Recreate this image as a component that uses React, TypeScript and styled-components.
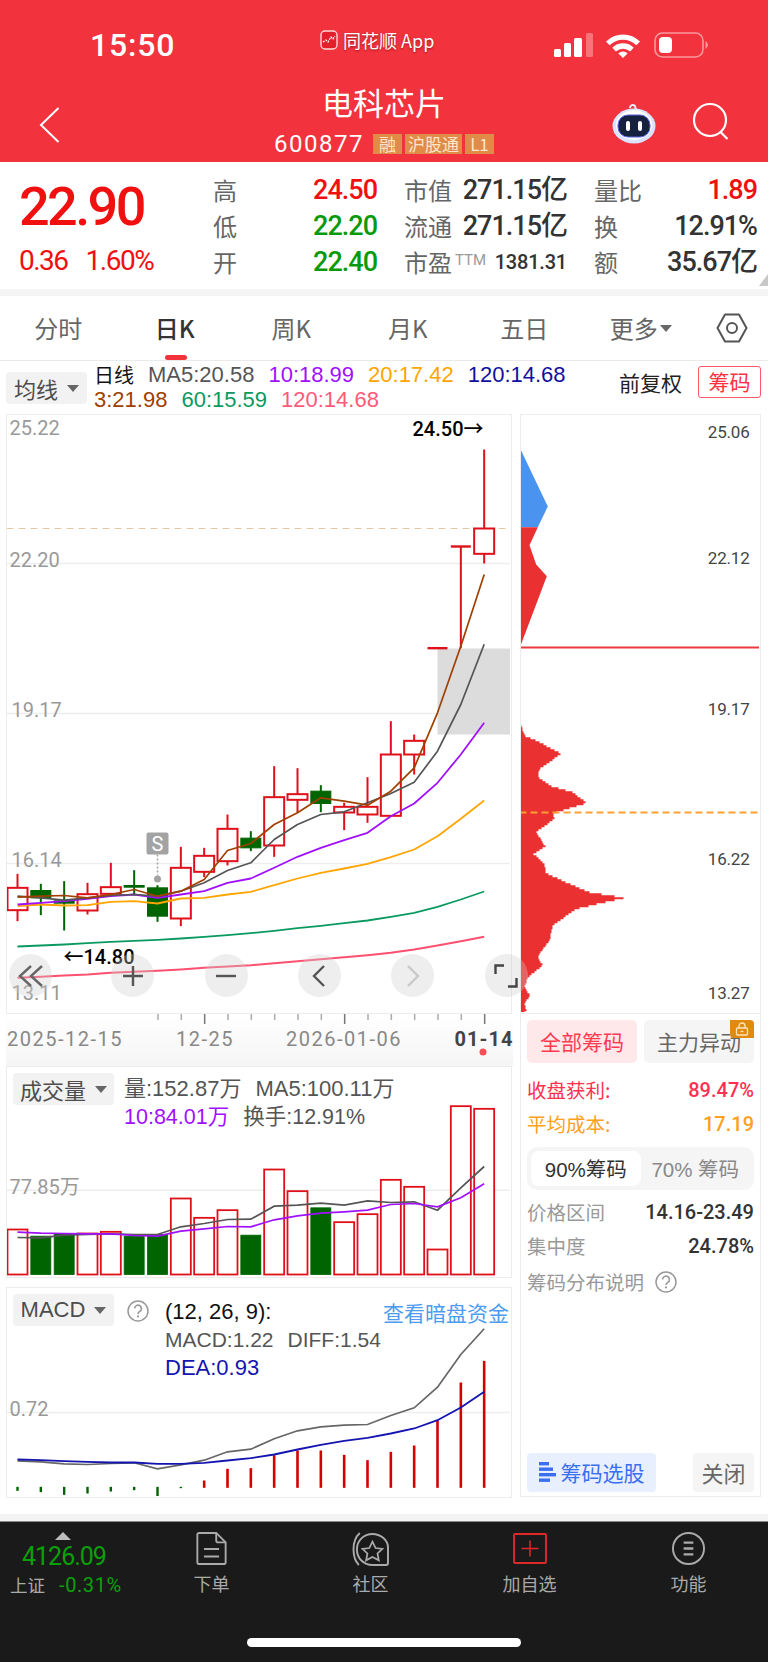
import React from "react";
import styled, { createGlobalStyle } from "styled-components";

const UI = '"Liberation Sans", "Noto Sans CJK SC", sans-serif';
const NUM = 'Roboto, "Noto Sans CJK SC", sans-serif';
const CJK = '"Noto Sans CJK SC", sans-serif';

const RED = "#e0101a";
const GREEN = "#006400";
const QUOTE_RED = "#f01010";
const QUOTE_GREEN = "#099a09";

const Global = createGlobalStyle`
  html, body { margin: 0; padding: 0; background: #fff; }
  body { width: 768px; height: 1662px; overflow: hidden; font-family: ${UI}; }
  * { box-sizing: border-box; }
`;

const Page = styled.div`
  width: 768px;
  height: 1662px;
  display: flex;
  flex-direction: column;
  overflow: hidden;
`;

/* ---------- red header ---------- */
const Header = styled.header`
  height: 162px;
  background: #f2323c;
  color: #fff;
  display: flex;
  flex-direction: column;
`;
const StatusBar = styled.div`
  height: 80px;
  display: grid;
  grid-template-columns: 320px 1fr auto;
  align-items: start;
`;
const Clock = styled.div`
  padding: 26px 0 0 90px;
  font: 500 32px/38px ${NUM};
  letter-spacing: 0.8px;
`;
const AppBadge = styled.div`
  display: flex;
  align-items: center;
  gap: 5px;
  padding-top: 28px;
  font: 400 18px/24px ${CJK};
  text-shadow: 0 1px 2px rgba(90, 0, 0, 0.55);
`;
const StatusIcons = styled.div`
  padding: 32px 58px 0 0;
`;
const NavRow = styled.div`
  height: 82px;
  display: grid;
  grid-template-columns: 1fr auto 1fr;
`;
const BackSlot = styled.div`
  padding: 26px 0 0 39px;
`;
const TitleBlock = styled.div`
  display: flex;
  flex-direction: column;
  align-items: center;
`;
const Title = styled.div`
  margin-top: 1px;
  font: 400 31px/42px ${CJK};
`;
const SubLine = styled.div`
  margin-top: 9px;
  display: flex;
  align-items: center;
  gap: 3px;
`;
const Code = styled.span`
  font: 400 24px/24px ${NUM};
  letter-spacing: 1.5px;
  margin-right: 6px;
`;
const Tag = styled.span`
  height: 20px;
  min-width: 29px;
  padding: 0 3px;
  text-align: center;
  background: #e08c48;
  color: #fde6c8;
  font: 400 17px/20px ${CJK};
`;
const ActionSlot = styled.div`
  display: flex;
  justify-content: flex-end;
  gap: 36px;
  padding: 22px 38px 0 0;
`;

/* ---------- quote summary ---------- */
const Quote = styled.section`
  position: relative;
  height: 127px;
  display: flex;
`;
const PriceBlock = styled.div`
  width: 213px;
  padding: 17px 0 0 19px;
`;
const Price = styled.div`
  font: 500 54px/56px ${NUM};
  letter-spacing: -2.6px;
  color: ${QUOTE_RED};
`;
const Change = styled.div`
  margin-top: 11px;
  display: flex;
  gap: 18px;
  font: 400 28px/30px ${NUM};
  letter-spacing: -1.5px;
  color: ${QUOTE_RED};
`;
const Stats = styled.div`
  display: grid;
  grid-template-columns: 164px 163px 163px;
  grid-auto-rows: 36px;
  column-gap: 27px;
  padding-top: 10px;
`;
const Stat = styled.div`
  display: flex;
  justify-content: space-between;
  align-items: center;
`;
const StatLabel = styled.span`
  font: 400 24px/36px ${CJK};
  color: #666;
`;
const StatValue = styled.span<{ $color?: string; $small?: boolean }>`
  font: 500 ${(p) => (p.$small ? "20px" : "27px")}/36px ${NUM};
  letter-spacing: ${(p) => (p.$small ? "-0.2px" : "-1px")};
  color: ${(p) => p.$color || "#333"};
`;
const Tm = styled.sup`
  font: 400 15px/15px ${NUM};
  color: #999;
  margin-left: 3px;
  vertical-align: 7px;
`;
const Fold = styled.svg`
  position: absolute;
  right: 0;
  bottom: 3px;
`;
const Divider = styled.div`
  height: 7px;
  background: #f5f5f5;
`;

/* ---------- period tabs ---------- */
const Tabs = styled.nav`
  height: 65px;
  display: flex;
  align-items: center;
  border-bottom: 1px solid #eaeaea;
`;
const TabItem = styled.div<{ $active?: boolean }>`
  position: relative;
  width: 116.5px;
  height: 64px;
  display: flex;
  align-items: center;
  justify-content: center;
  gap: 2px;
  font: ${(p) => (p.$active ? 500 : 400)} 24px/64px ${UI};
  color: ${(p) => (p.$active ? "#333" : "#666")};
  &::after {
    content: "";
    display: ${(p) => (p.$active ? "block" : "none")};
    position: absolute;
    left: 48px;
    bottom: 0;
    width: 22px;
    height: 5px;
    border-radius: 3px;
    background: #f4323c;
  }
`;
const TabText = styled.span`
  font-family: ${CJK};
  font-size: 24px;
  font-weight: inherit;
`;
const Caret = styled.i<{ $size?: number; $color?: string }>`
  display: inline-block;
  width: 0;
  height: 0;
  border-left: ${(p) => p.$size || 6}px solid transparent;
  border-right: ${(p) => p.$size || 6}px solid transparent;
  border-top: ${(p) => (p.$size || 6) + 1}px solid ${(p) => p.$color || "#666"};
`;
const SettingSlot = styled.div`
  margin-left: 17px;
  display: flex;
`;

/* ---------- moving average legend ---------- */
const LegendBar = styled.div`
  height: 53px;
  display: flex;
  padding-left: 6px;
`;
const Picker = styled.div<{ $w: number }>`
  width: ${(p) => p.$w}px;
  height: 32px;
  flex: none;
  display: flex;
  align-items: center;
  justify-content: center;
  gap: 9px;
  border-radius: 4px;
  background: #f2f2f2;
  font: 400 22px/32px ${CJK};
  color: #4d4d4d;
`;
const PickerLatin = styled.span`
  font-family: ${UI};
`;
const PickerSlot = styled.div`
  padding-top: 11px;
`;
const LegendRows = styled.div`
  margin-left: 7px;
  padding-top: 1px;
`;
const LegendRow = styled.div`
  display: flex;
  gap: 14px;
  height: 25px;
  font: 400 22px/25px ${UI};
`;
const LegendItem = styled.span<{ $c: string }>`
  color: ${(p) => p.$c};
`;
const LegendCn = styled.span`
  font: 400 20px/25px ${CJK};
  color: #111;
`;
const LegendRight = styled.div`
  margin-left: auto;
  padding: 5px 7px 0 0;
  display: flex;
  align-items: flex-start;
  gap: 16px;
`;
const Adjust = styled.span`
  font: 400 21px/32px ${CJK};
  color: #222;
`;
const ChipToggle = styled.span`
  width: 63px;
  height: 32px;
  border: 1.5px solid #ff5a6a;
  border-radius: 3px;
  text-align: center;
  font: 400 21px/28px ${CJK};
  color: #ff3040;
`;

/* ---------- chart area ---------- */
const ChartArea = styled.div`
  display: grid;
  grid-template-columns: 506px 241px;
  column-gap: 8px;
  padding-left: 6px;
`;
const Column = styled.div`
  display: flex;
  flex-direction: column;
`;
const Panel = styled.div<{ $h: number; $mt?: number }>`
  position: relative;
  height: ${(p) => p.$h}px;
  margin-top: ${(p) => p.$mt || 0}px;
  border: 1.5px solid #ececec;
`;
const Plot = styled.svg`
  display: block;
`;
const PlotNumber = styled.text<{ $c?: string; $size?: number; $w?: number }>`
  font-family: ${NUM};
  font-size: ${(p) => p.$size || 20}px;
  font-weight: ${(p) => p.$w || 400};
  fill: ${(p) => p.$c || "#999"};
`;
const ControlBar = styled.div`
  position: absolute;
  left: 2px;
  top: 539px;
  width: 518px;
  display: flex;
  gap: 50.33px;
  z-index: 3;
`;
const RoundButton = styled.div`
  width: 43px;
  height: 43px;
  flex: none;
  border-radius: 50%;
  background: rgba(205, 205, 205, 0.34);
  display: flex;
  align-items: center;
  justify-content: center;
  &:first-child {
    margin-right: 9px;
  }
`;
const DateStrip = styled.div`
  height: 52px;
  margin-right: -1px;
`;
const IndicatorHead = styled.div`
  position: absolute;
  left: 6px;
  top: 6px;
  right: 2px;
  display: flex;
`;
const IndicatorRows = styled.div<{ $ml?: number; $pt?: number }>`
  margin-left: ${(p) => p.$ml || 10}px;
  padding-top: ${(p) => p.$pt ?? 2}px;
  flex: 1;
`;
const IndicatorRow = styled.div<{ $f?: number }>`
  display: flex;
  gap: 14px;
  height: 28px;
  font: 400 ${(p) => p.$f || 22}px/28px ${UI};
  color: #555;
`;
const Accent = styled.span<{ $c: string }>`
  color: ${(p) => p.$c};
`;
const Link = styled.span`
  margin-left: auto;
  font: 400 21px/28px ${CJK};
  color: #4c9cf0;
`;
const HelpSlot = styled.div`
  margin: 6px 0 0 13px;
  display: flex;
  align-items: flex-start;
`;
const RightInfo = styled.div`
  height: 483px;
  padding: 6px 6px 4px 6px;
  border: 1.5px solid #ececec;
  border-top: 0;
  display: flex;
  flex-direction: column;
`;
const ChipTabs = styled.div`
  display: flex;
  justify-content: space-between;
`;
const ChipTab = styled.div<{ $on?: boolean }>`
  position: relative;
  width: 110px;
  height: 43px;
  border-radius: 5px;
  text-align: center;
  background: ${(p) => (p.$on ? "#ffe8ea" : "#f5f5f5")};
  color: ${(p) => (p.$on ? "#ff3a50" : "#666")};
  font: 400 21px/43px ${CJK};
`;
const LockBadge = styled.div`
  position: absolute;
  right: 0;
  top: 0;
  width: 24px;
  height: 18px;
  border-radius: 0 4px 0 4px;
  background: #e08a10;
  display: flex;
  align-items: center;
  justify-content: center;
`;
const InfoRow = styled.div<{ $c?: string; $vc?: string; $mt?: number }>`
  height: 34px;
  margin-top: ${(p) => p.$mt || 0}px;
  display: flex;
  justify-content: space-between;
  align-items: center;
  color: ${(p) => p.$c || "#999"};
  font: 400 19.5px/34px ${CJK};
  b {
    font: 500 20px/34px ${NUM};
    color: ${(p) => p.$vc || p.$c || "#333"};
  }
`;
const HelpRow = styled.div`
  height: 34px;
  margin-top: 2px;
  display: flex;
  align-items: center;
  gap: 11px;
  color: #999;
  font: 400 19.5px/34px ${CJK};
`;
const Segment = styled.div`
  height: 43px;
  margin-top: 6px;
  margin-bottom: 5px;
  padding: 4px;
  border-radius: 10px;
  background: #f5f5f5;
  display: flex;
`;
const SegmentItem = styled.div<{ $on?: boolean }>`
  flex: 1;
  border-radius: 8px;
  text-align: center;
  background: ${(p) => (p.$on ? "#fff" : "transparent")};
  color: ${(p) => (p.$on ? "#333" : "#888")};
  font: 400 20.5px/35px ${UI};
  span {
    font-family: ${CJK};
  }
`;
const FootActions = styled.div`
  margin-top: auto;
  display: flex;
  justify-content: space-between;
`;
const FootPrimary = styled.div`
  width: 129px;
  height: 39px;
  border-radius: 4px;
  background: #e8f0ff;
  color: #3a6ff0;
  font: 400 21px/39px ${CJK};
  display: flex;
  align-items: center;
  justify-content: center;
  gap: 5px;
`;
const FootClose = styled.div`
  width: 61px;
  height: 39px;
  border-radius: 4px;
  background: #f5f5f5;
  color: #666;
  text-align: center;
  font: 400 22px/39px ${CJK};
`;

/* ---------- bottom bar ---------- */
const Gutter = styled.div`
  height: 16px;
`;
const BottomStrip = styled.div`
  height: 7px;
  background: #f3f3f3;
`;
const Dock = styled.footer`
  flex: 1;
  background: #1a1a1a;
  border-top: 1px solid #8a8a8a;
  display: flex;
  flex-direction: column;
`;
const DockRow = styled.div`
  height: 116px;
  display: flex;
`;
const IndexBlock = styled.div`
  width: 132px;
  padding: 10px 0 0 10px;
  display: flex;
  flex-direction: column;
`;
const UpMark = styled.i`
  width: 0;
  height: 0;
  margin-left: 45px;
  border-left: 8px solid transparent;
  border-right: 8px solid transparent;
  border-bottom: 8px solid #bdbdbd;
`;
const IndexValue = styled.div`
  margin: 2px 0 0 12px;
  font: 400 25px/30px ${NUM};
  letter-spacing: -1px;
  color: #0aa00a;
`;
const IndexLine = styled.div`
  margin-top: -1px;
  display: flex;
  align-items: center;
  gap: 14px;
  font: 400 17.5px/28px ${CJK};
  color: #aaa;
`;
const IndexPct = styled.span`
  font: 400 20px/28px ${NUM};
  letter-spacing: 0.6px;
  color: #0aa00a;
`;
const DockItem = styled.div`
  width: 159px;
  display: flex;
  flex-direction: column;
  align-items: center;
  padding-top: 9px;
`;
const DockGlyph = styled.div`
  height: 35px;
  display: flex;
  align-items: center;
`;
const DockLabel = styled.span`
  margin-top: 3px;
  font: 400 18px/28px ${CJK};
  color: #aaa;
`;
const HomeBar = styled.div`
  align-self: center;
  width: 274px;
  height: 9px;
  border-radius: 5px;
  background: #fff;
`;

/* ---------- chart data ---------- */
// Series are kept in thirds of a pixel from a per-chart origin.
const slotX = (i: number) => 18 + (70 / 3) * i;
const at = (origin: number) => (v: number) => origin + v / 3;
const toPoints = (vals: number[], map: (v: number) => number) =>
  vals.map((v, i) => `${slotX(i).toFixed(1)},${map(v).toFixed(1)}`).join(" ");

type Candle = [dir: "u" | "d", high: number, low: number, top: number, bottom: number];
const candles: Candle[] = [
  ["u", 463, 605, 505, 572],
  ["d", 493, 587, 513, 535],
  ["d", 485, 633, 544, 551],
  ["u", 490, 585, 524, 573],
  ["u", 430, 530, 503, 523],
  ["d", 452, 525, 498, 503],
  ["d", 497, 607, 505, 590],
  ["u", 382, 620, 445, 597],
  ["u", 385, 473, 409, 457],
  ["u", 285, 438, 328, 425],
  ["d", 335, 395, 356, 385],
  ["u", 140, 412, 233, 378],
  ["u", 146, 280, 224, 241],
  ["d", 197, 278, 215, 252],
  ["u", 250, 332, 262, 279],
  ["u", 173, 310, 262, 285],
  ["u", 5, 290, 105, 289],
  ["u", 45, 165, 64, 105],
  ["u", -214, -214, -214, -214],
  ["u", -519, -214, -519, -519],
  ["u", -810, -468, -573, -497],
];
const maLines: [string, number, number[]][] = [
  ["#ff5070", 2, [775, 772, 768, 765, 760, 757, 754, 750, 745, 741, 737, 731, 725, 719, 713, 707, 700, 690, 678, 665, 652]],
  ["#0a9a60", 1.8, [681, 678, 675, 671, 667, 664, 661, 657, 652, 647, 641, 634, 626, 619, 611, 603, 592, 580, 562, 540, 516]],
  ["#ffa500", 1.8, [560, 555, 558, 557, 547, 545, 552, 537, 535, 525, 517, 497, 477, 460, 447, 433, 413, 390, 350, 298, 243]],
  ["#a010ff", 1.8, [555, 550, 545, 538, 530, 525, 535, 525, 515, 490, 477, 445, 412, 385, 362, 340, 290, 252, 190, 105, 10]],
  ["#555555", 1.7, [530, 535, 542, 535, 528, 525, 530, 515, 490, 453, 430, 360, 315, 285, 277, 250, 222, 188, 95, -45, -226]],
  ["#a04000", 1.7, [533, 530, 528, 535, 525, 510, 530, 515, 480, 393, 372, 315, 280, 235, 245, 257, 215, 145, -20, -220, -435]],
];
const volumes: [boolean, number][] = [
  [true, 525], [false, 545], [false, 537], [true, 537], [true, 532], [false, 545], [false, 540],
  [true, 432], [true, 490], [true, 467], [false, 542], [true, 345], [true, 410], [false, 460],
  [true, 503], [true, 479], [true, 376], [true, 397], [true, 585], [true, 155], [true, 163],
];
const volMa5 = [549, 550, 542, 540, 538, 540, 540, 517, 507, 495, 494, 455, 452, 446, 452, 439, 444, 442, 467, 400, 336];
const volMa10 = [533, 536, 537, 538, 538, 543, 545, 530, 523, 516, 517, 496, 484, 476, 472, 467, 450, 447, 457, 430, 388];
const histo = [634, 638, 646, 642, 636, 632, 655, 626, 603, 568, 566, 527, 513, 513, 526, 542, 517, 498, 422, 309, 244];
const diff = [544, 547, 553, 555, 552, 550, 568, 556, 542, 517, 509, 478, 454, 442, 437, 435, 408, 385, 323, 225, 148];
const dea = [540, 542, 545, 547, 549, 549, 553, 553, 550, 543, 536, 525, 510, 496, 484, 475, 462, 447, 422, 384, 337];

// Chip profile outline: [distance from panel edge, row], stepped every 2px.
const profile: [number, number][] = [
  [32, 5], [45, 45], [90, 65], [155, 100], [90, 145], [85, 170], [125, 197], [190, 215], [232, 248],
  [130, 278], [135, 295], [80, 335], [108, 378], [72, 400], [105, 430], [110, 458], [180, 490],
  [240, 515], [345, 532], [280, 547], [200, 565], [130, 615], [120, 660], [85, 708], [100, 735],
  [55, 770], [45, 800], [62, 825], [45, 850], [50, 870], [32, 885],
];
const chipPath = () => {
  const px = (v: number) => 510 + v / 3;
  const py = (v: number) => 720 + v / 3;
  let d = `M520.7 ${py(5).toFixed(1)}`;
  let y = py(5);
  const end = py(885);
  while (y < end) {
    let x = 520.7;
    for (let i = 0; i < profile.length - 1; i++) {
      const [x0, y0] = profile[i];
      const [x1, y1] = profile[i + 1];
      if (y >= py(y0) && y <= py(y1)) {
        x = px(x0 + ((x1 - x0) * (y - py(y0))) / (py(y1) - py(y0)));
        break;
      }
    }
    d += `H${Math.round(x)}V${(y + 2).toFixed(1)}`;
    y += 2;
  }
  return `${d}H520.7Z`;
};

const MainPlot = () => {
  const m = at(720);
  return (
    <Plot width={503} height={597} viewBox="7.5 415.5 503 597">
      <g stroke="#ededed" strokeWidth="1.5">
        <line x1="7" x2="511" y1="564" y2="564" />
        <line x1="7" x2="511" y1="714" y2="714" />
        <line x1="7" x2="511" y1="864" y2="864" />
      </g>
      <line x1="7" x2="507" y1="529" y2="529" stroke="#e8c8a0" strokeWidth="1" strokeDasharray="7 5" />
      <rect x="438" y="649" width="74" height="86" fill="#dcdcdc" />
      {candles.map(([dir, hi, lo, top, bottom], i) => {
        const x = slotX(i);
        const c = dir === "u" ? RED : GREEN;
        if (top === bottom) {
          return (
            <g key={i} stroke={c}>
              <line x1={x} x2={x} y1={m(hi)} y2={m(lo)} strokeWidth="2" />
              <line x1={x - 10} x2={x + 10} y1={m(top)} y2={m(top)} strokeWidth="2.4" />
            </g>
          );
        }
        return (
          <g key={i}>
            <line x1={x} x2={x} y1={m(hi)} y2={m(lo)} stroke={c} strokeWidth="2" />
            <rect
              x={x - 10}
              y={m(top)}
              width="20"
              height={m(bottom) - m(top)}
              fill={dir === "u" ? "#fff" : GREEN}
              stroke={c}
              strokeWidth={dir === "u" ? 2 : 1}
            />
          </g>
        );
      })}
      {maLines.map(([c, w, vals]) => (
        <polyline key={c} points={toPoints(vals, m)} fill="none" stroke={c} strokeWidth={w} strokeLinejoin="round" />
      ))}
      {/* sell marker */}
      <rect x="147" y="833" width="22" height="22" rx="2" fill="#a3a3a3" />
      <PlotNumber x="158" y="851" $c="#fff" $size={20} textAnchor="middle">S</PlotNumber>
      <line x1="158" x2="158" y1="855" y2="876" stroke="#a3a3a3" strokeWidth="1.5" strokeDasharray="2 2" />
      <circle cx="158" cy="879.5" r="3.5" fill="#a3a3a3" />
      {/* axis and extreme prices */}
      <PlotNumber x="10" y="435">25.22</PlotNumber>
      <PlotNumber x="10" y="567">22.20</PlotNumber>
      <PlotNumber x="12" y="717">19.17</PlotNumber>
      <PlotNumber x="12" y="867">16.14</PlotNumber>
      <PlotNumber x="12" y="1000">13.11</PlotNumber>
      <PlotNumber x="413" y="436" $c="#000" $w={500}>24.50→</PlotNumber>
      <PlotNumber x="64" y="964" $c="#000" $w={500}>←14.80</PlotNumber>
    </Plot>
  );
};

const chipLabels: [string, number][] = [
  ["25.06", 438],
  ["22.12", 564],
  ["19.17", 715],
  ["16.22", 865],
  ["13.27", 999],
];

const ChipPlot = () => (
  <Plot width={238} height={597} viewBox="521.5 415.5 238 597">
    <path d="M520.7 449L548.3 507L538.3 527.7H520.7Z" fill="#4a94f0" />
    <path d="M520.7 527.7H538.3L530 545.7L536.7 565L547.3 576.7L520.7 647Z" fill="#ea3030" />
    <path d={chipPath()} fill="#ea3030" />
    <line x1="520" x2="761" y1="648" y2="648" stroke="#ea3a3e" strokeWidth="2" />
    <line x1="520" x2="761" y1="813" y2="813" stroke="#ffa030" strokeWidth="1.8" strokeDasharray="7 4" />
    {chipLabels.map(([t, y]) => (
      <PlotNumber key={t} x="750" y={y} $c="#444" $size={17} letterSpacing="-0.2" textAnchor="end">
        {t}
      </PlotNumber>
    ))}
  </Plot>
);

const DateAxis = () => (
  <Plot width={507} height={52} viewBox="6 1014 507 52">
    <defs>
      <linearGradient id="fade" x1="0" x2="0" y1="0" y2="1">
        <stop offset="0" stopColor="#fff" />
        <stop offset="1" stopColor="#f5f5f5" />
      </linearGradient>
    </defs>
    <rect x="6" y="1014" width="507" height="52" fill="url(#fade)" />
    {candles.map((_, i) =>
      i < 6 ? null : (
        <line
          key={i}
          x1={slotX(i)}
          x2={slotX(i)}
          y1="1014"
          y2={i === 8 || i === 14 || i === 20 ? 1024 : 1020}
          stroke={i === 8 || i === 14 || i === 20 ? "#777" : "#aaa"}
          strokeWidth="1.5"
        />
      ),
    )}
    <PlotNumber x="7" y="1046" $c="#888" letterSpacing="1.5">2025-12-15</PlotNumber>
    <PlotNumber x="205" y="1046" $c="#888" letterSpacing="1.5" textAnchor="middle">12-25</PlotNumber>
    <PlotNumber x="344" y="1046" $c="#888" letterSpacing="1.5" textAnchor="middle">2026-01-06</PlotNumber>
    <PlotNumber x="484" y="1046" $c="#444" $w={700} letterSpacing="1" textAnchor="middle">01-14</PlotNumber>
    <circle cx="483" cy="1052" r="3.5" fill="#f4505a" />
  </Plot>
);

const VolumePlot = () => {
  const m = at(1055);
  return (
    <Plot width={503} height={209} viewBox="7.5 1067.5 503 209">
      <line x1="7" x2="511" y1="1190.7" y2="1190.7" stroke="#ededed" strokeWidth="1.5" />
      {volumes.map(([up, top], i) => (
        <rect
          key={i}
          x={slotX(i) - 10}
          y={m(top)}
          width="20"
          height={1275 - m(top)}
          fill={up ? "#fff" : GREEN}
          stroke={up ? RED : GREEN}
          strokeWidth={up ? 1.8 : 0.8}
        />
      ))}
      <polyline points={toPoints(volMa5, m)} fill="none" stroke="#555" strokeWidth="1.7" />
      <polyline points={toPoints(volMa10, m)} fill="none" stroke="#a010ff" strokeWidth="1.7" />
      <PlotNumber x="10" y="1194">77.85万</PlotNumber>
    </Plot>
  );
};

const MacdPlot = () => {
  const m = at(1280);
  return (
    <Plot width={503} height={208} viewBox="7.5 1288.5 503 208">
      <line x1="7" x2="511" y1="1413" y2="1413" stroke="#ededed" strokeWidth="1.5" />
      {histo.map((v, i) => {
        const x = slotX(i);
        const base = i < 8 ? 622 : 625;
        const red = i > 7;
        return (
          <line
            key={i}
            x1={x}
            x2={x}
            y1={m(red ? v : base)}
            y2={m(red ? base : v)}
            stroke={red ? "#d40000" : GREEN}
            strokeWidth={red ? 2.6 : 2.4}
          />
        );
      })}
      <polyline points={toPoints(diff, m)} fill="none" stroke="#666" strokeWidth="1.7" />
      <polyline points={toPoints(dea, m)} fill="none" stroke="#1414b0" strokeWidth="1.8" />
      <PlotNumber x="10" y="1416">0.72</PlotNumber>
    </Plot>
  );
};

/* ---------- small icons ---------- */
const LogoMark = () => (
  <svg width="18" height="20" viewBox="0 0 18 20">
    <rect x="1" y="1" width="16" height="18" rx="4" fill="#e2202c" stroke="#ffd7d7" strokeWidth="1.4" />
    <path d="M3 12l3-2 2 2 3-5 2 2 2-3" fill="none" stroke="#fff" strokeWidth="1.2" strokeDasharray="2 1" />
  </svg>
);
const StatusGlyphs = () => (
  <svg width="158" height="26" viewBox="552 32 158 26">
    <g fill="#fff">
      <rect x="554" y="49" width="7" height="8" rx="1.5" />
      <rect x="564" y="43" width="7" height="14" rx="1.5" />
      <rect x="574" y="38" width="8" height="19" rx="1.5" />
      <rect x="586" y="33" width="7" height="24" rx="1.5" opacity="0.32" />
    </g>
    <path d="M606 41.5a24 24 0 0 1 34 0l-3.6 3.8a19 19 0 0 0-26.8 0Z" fill="#fff" />
    <path d="M612.3 47.8a15 15 0 0 1 21.4 0l-3.6 3.8a10 10 0 0 0-14.2 0Z" fill="#fff" />
    <path d="M618.4 53.6a6 6 0 0 1 9.2 0L623 58Z" fill="#fff" />
    <rect x="655" y="33" width="48" height="24" rx="7.5" fill="none" stroke="#fff" strokeOpacity="0.5" strokeWidth="1.6" />
    <rect x="659" y="37" width="13" height="16" rx="4" fill="#fff" />
    <path d="M705.5 41v8a4.5 4.5 0 0 0 0-8Z" fill="#fff" fillOpacity="0.5" />
  </svg>
);
const BackIcon = () => (
  <svg width="22" height="38" viewBox="0 0 22 38">
    <path d="M19.5 2L2 19l17.5 17" fill="none" stroke="#fff" strokeWidth="2" />
  </svg>
);
const RobotIcon = () => (
  <svg width="44" height="42" viewBox="0 0 44 42">
    <path d="M18 6c0-3 3-4 5-2l1 4" fill="none" stroke="#e7ecff" strokeWidth="2" />
    <ellipse cx="22" cy="24" rx="21.5" ry="17.5" fill="#dbe3ff" />
    <ellipse cx="22" cy="23" rx="18" ry="15" fill="#fff" />
    <rect x="6" y="13" width="32" height="22" rx="10" fill="#16203f" stroke="#5a62e0" strokeWidth="1" />
    <rect x="14" y="19" width="4" height="10" rx="2" fill="#fff" />
    <rect x="26" y="19" width="4" height="10" rx="2" fill="#fff" />
  </svg>
);
const SearchIcon = () => (
  <svg width="38" height="38" viewBox="0 0 38 38">
    <circle cx="18" cy="18" r="16" fill="none" stroke="#fff" strokeWidth="2.2" />
    <path d="M28.5 30l7 7" stroke="#fff" strokeWidth="2.2" />
  </svg>
);
const HexIcon = () => (
  <svg width="32" height="30" viewBox="0 0 32 30">
    <path d="M9 1.5h14L30.5 15 23 28.5H9L1.5 15Z" fill="none" stroke="#555" strokeWidth="2" strokeLinejoin="round" />
    <circle cx="16" cy="15" r="5" fill="none" stroke="#555" strokeWidth="2" />
  </svg>
);
const HelpIcon = ({ c = "#999" }: { c?: string }) => (
  <svg width="22" height="22" viewBox="0 0 22 22">
    <circle cx="11" cy="11" r="10" fill="none" stroke={c} strokeWidth="1.5" />
    <path d="M7.6 8.5a3.4 3.4 0 1 1 5.2 2.9c-1.2.8-1.8 1.4-1.8 2.6" fill="none" stroke={c} strokeWidth="1.6" />
    <circle cx="11" cy="16.4" r="1.1" fill={c} />
  </svg>
);
const LockIcon = () => (
  <svg width="14" height="14" viewBox="0 0 14 14">
    <path d="M4 6V4a3 3 0 0 1 6 0v2" fill="none" stroke="#ffe6b8" strokeWidth="1.3" />
    <rect x="1.5" y="6" width="11" height="7" rx="1" fill="none" stroke="#ffe6b8" strokeWidth="1.3" />
    <path d="M5.5 9.5h3" stroke="#ffe6b8" strokeWidth="1.3" />
  </svg>
);
const ListIcon = () => (
  <svg width="17" height="21" viewBox="0 0 17 21">
    <g fill="#3a6ff0">
      <rect x="0" y="0" width="10" height="3.4" />
      <rect x="0" y="5.500" width="14" height="3.4" />
      <rect x="0" y="11" width="17" height="3.4" />
      <rect x="0" y="16.500" width="11" height="3.4" />
    </g>
  </svg>
);
const btnStroke = { fill: "none", stroke: "#555", strokeWidth: 2.4 };
const ControlGlyphs = {
  rewind: (
    <svg width="26" height="24" viewBox="0 0 26 24">
      <path d="M13 2L2 12l11 10M24 2L13 12l11 10" {...btnStroke} stroke="#666" />
    </svg>
  ),
  plus: (
    <svg width="22" height="22" viewBox="0 0 22 22">
      <path d="M1 11h20M11 1v20" {...btnStroke} />
    </svg>
  ),
  minus: (
    <svg width="22" height="22" viewBox="0 0 22 22">
      <path d="M1 11h20" {...btnStroke} />
    </svg>
  ),
  prev: (
    <svg width="14" height="22" viewBox="0 0 14 22">
      <path d="M12 1L2 11l10 10" {...btnStroke} />
    </svg>
  ),
  next: (
    <svg width="14" height="22" viewBox="0 0 14 22">
      <path d="M2 1l10 10L2 21" {...btnStroke} stroke="#c8c8c8" />
    </svg>
  ),
  expand: (
    <svg width="24" height="24" viewBox="0 0 24 24">
      <path d="M1.500 10V1.500H10M14 22.500H22.500V14" {...btnStroke} stroke="#444" />
    </svg>
  ),
};
const dockStroke = { fill: "none", stroke: "#aaa", strokeWidth: 2 };
const DocIcon = () => (
  <svg width="31" height="33" viewBox="0 0 32 35">
    <path d="M3 1h18l10 10v21a2 2 0 0 1-2 2H3a2 2 0 0 1-2-2V3a2 2 0 0 1 2-2Z" {...dockStroke} />
    <path d="M21 1v8a2 2 0 0 0 2 2h8M8 18h16M8 26h16" {...dockStroke} />
  </svg>
);
const CommunityIcon = () => (
  <svg width="37" height="34" viewBox="0 0 38 35">
    <path d="M7 34C0 27 -1 9 8 1" {...dockStroke} />
    <path d="M21 2c8 0 16 6 16 14v16a2 2 0 0 1-2 2H21C12 34 5 27 5 18S12 2 21 2Z" {...dockStroke} />
    <path d="M21 10l3.200 6.500 7 .8-5 4.800 1.300 7-6.500-3.500-6.500 3.500 1.300-7-5-4.800 7-.8Z" fill="none" stroke="#aaa" strokeWidth="1.8" />
  </svg>
);
const AddIcon = () => (
  <svg width="34" height="31" viewBox="0 0 36 33">
    <rect x="1" y="1" width="34" height="31" rx="1" fill="none" stroke="#e02828" strokeWidth="2" />
    <path d="M9 16.500h18M18 8v17" stroke="#e02828" strokeWidth="1.6" fill="none" />
  </svg>
);
const MenuIcon = () => (
  <svg width="33" height="33" viewBox="0 0 34 34">
    <circle cx="17" cy="17" r="16" {...dockStroke} />
    <path d="M12 11h10M12 17h10M12 23h10" {...dockStroke} strokeWidth="2.4" />
  </svg>
);

const tabs = ["分时", "日K", "周K", "月K", "五日"];

export default function App() {
  return (
    <Page>
      <Global />
      <Header>
        <StatusBar>
          <Clock>15:50</Clock>
          <AppBadge>
            <LogoMark />
            同花顺 App
          </AppBadge>
          <StatusIcons>
            <StatusGlyphs />
          </StatusIcons>
        </StatusBar>
        <NavRow>
          <BackSlot>
            <BackIcon />
          </BackSlot>
          <TitleBlock>
            <Title>电科芯片</Title>
            <SubLine>
              <Code>600877</Code>
              <Tag>融</Tag>
              <Tag>沪股通</Tag>
              <Tag>L1</Tag>
            </SubLine>
          </TitleBlock>
          <ActionSlot>
            <RobotIcon />
            <SearchIcon />
          </ActionSlot>
        </NavRow>
      </Header>

      <Quote>
        <PriceBlock>
          <Price>22.90</Price>
          <Change>
            <span>0.36</span>
            <span>1.60%</span>
          </Change>
        </PriceBlock>
        <Stats>
          <Stat><StatLabel>高</StatLabel><StatValue $color={QUOTE_RED}>24.50</StatValue></Stat>
          <Stat><StatLabel>市值</StatLabel><StatValue>271.15亿</StatValue></Stat>
          <Stat><StatLabel>量比</StatLabel><StatValue $color={QUOTE_RED}>1.89</StatValue></Stat>
          <Stat><StatLabel>低</StatLabel><StatValue $color={QUOTE_GREEN}>22.20</StatValue></Stat>
          <Stat><StatLabel>流通</StatLabel><StatValue>271.15亿</StatValue></Stat>
          <Stat><StatLabel>换</StatLabel><StatValue>12.91%</StatValue></Stat>
          <Stat><StatLabel>开</StatLabel><StatValue $color={QUOTE_GREEN}>22.40</StatValue></Stat>
          <Stat><StatLabel>市盈<Tm>TTM</Tm></StatLabel><StatValue $small>1381.31</StatValue></Stat>
          <Stat><StatLabel>额</StatLabel><StatValue>35.67亿</StatValue></Stat>
        </Stats>
        <Fold width="9" height="12" viewBox="0 0 9 12">
          <path d="M9 0v12H0Z" fill="#c8c8c8" />
        </Fold>
      </Quote>
      <Divider />

      <Tabs>
        {tabs.map((t) => (
          <TabItem key={t} $active={t === "日K"}>
            <TabText>{t}</TabText>
          </TabItem>
        ))}
        <TabItem>
          <TabText>更多</TabText>
          <Caret />
        </TabItem>
        <SettingSlot>
          <HexIcon />
        </SettingSlot>
      </Tabs>

      <LegendBar>
        <PickerSlot>
          <Picker $w={81}>
            均线
            <Caret />
          </Picker>
        </PickerSlot>
        <LegendRows>
          <LegendRow>
            <LegendCn>日线</LegendCn>
            <LegendItem $c="#555">MA5:20.58</LegendItem>
            <LegendItem $c="#a010ff">10:18.99</LegendItem>
            <LegendItem $c="#ffa500">20:17.42</LegendItem>
            <LegendItem $c="#1010a0">120:14.68</LegendItem>
          </LegendRow>
          <LegendRow>
            <LegendItem $c="#a04000">3:21.98</LegendItem>
            <LegendItem $c="#0a9a60">60:15.59</LegendItem>
            <LegendItem $c="#ff5a78">120:14.68</LegendItem>
          </LegendRow>
        </LegendRows>
        <LegendRight>
          <Adjust>前复权</Adjust>
          <ChipToggle>筹码</ChipToggle>
        </LegendRight>
      </LegendBar>

      <ChartArea>
        <Column>
          <Panel $h={600}>
            <MainPlot />
            <ControlBar>
              <RoundButton>{ControlGlyphs.rewind}</RoundButton>
              <RoundButton>{ControlGlyphs.plus}</RoundButton>
              <RoundButton>{ControlGlyphs.minus}</RoundButton>
              <RoundButton>{ControlGlyphs.prev}</RoundButton>
              <RoundButton>{ControlGlyphs.next}</RoundButton>
              <RoundButton>{ControlGlyphs.expand}</RoundButton>
            </ControlBar>
          </Panel>
          <DateStrip>
            <DateAxis />
          </DateStrip>
          <Panel $h={212}>
            <VolumePlot />
            <IndicatorHead>
              <Picker $w={101}>
                成交量
                <Caret />
              </Picker>
              <IndicatorRows>
                <IndicatorRow>
                  <span>量:152.87万</span>
                  <span>MA5:100.11万</span>
                </IndicatorRow>
                <IndicatorRow $f={21.5}>
                  <Accent $c="#a010ff">10:84.01万</Accent>
                  <span>换手:12.91%</span>
                </IndicatorRow>
              </IndicatorRows>
            </IndicatorHead>
          </Panel>
          <Panel $h={211} $mt={9}>
            <MacdPlot />
            <IndicatorHead>
              <Picker $w={101}>
                <PickerLatin>MACD</PickerLatin>
                <Caret />
              </Picker>
              <HelpSlot>
                <HelpIcon />
              </HelpSlot>
              <IndicatorRows $ml={16} $pt={4}>
                <IndicatorRow>
                  <Accent $c="#111">(12, 26, 9):</Accent>
                  <Link>查看暗盘资金</Link>
                </IndicatorRow>
                <IndicatorRow $f={21}>
                  <span>MACD:1.22</span>
                  <span>DIFF:1.54</span>
                </IndicatorRow>
                <IndicatorRow>
                  <Accent $c="#1414b0">DEA:0.93</Accent>
                </IndicatorRow>
              </IndicatorRows>
            </IndicatorHead>
          </Panel>
        </Column>
        <Column>
          <Panel $h={600}>
            <ChipPlot />
          </Panel>
          <RightInfo>
            <ChipTabs>
              <ChipTab $on>全部筹码</ChipTab>
              <ChipTab>
                主力异动
                <LockBadge>
                  <LockIcon />
                </LockBadge>
              </ChipTab>
            </ChipTabs>
            <InfoRow $c="#ff3050" $mt={10}>收盘获利:<b>89.47%</b></InfoRow>
            <InfoRow $c="#ffa020">平均成本:<b>17.19</b></InfoRow>
            <Segment>
              <SegmentItem $on>90%<span>筹码</span></SegmentItem>
              <SegmentItem>70% <span>筹码</span></SegmentItem>
            </Segment>
            <InfoRow $vc="#333">价格区间<b>14.16-23.49</b></InfoRow>
            <InfoRow $vc="#333">集中度<b>24.78%</b></InfoRow>
            <HelpRow>
              筹码分布说明
              <HelpIcon />
            </HelpRow>
            <FootActions>
              <FootPrimary>
                <ListIcon />
                筹码选股
              </FootPrimary>
              <FootClose>关闭</FootClose>
            </FootActions>
          </RightInfo>
        </Column>
      </ChartArea>

      <Gutter />
      <BottomStrip />
      <Dock>
        <DockRow>
          <IndexBlock>
            <UpMark />
            <IndexValue>4126.09</IndexValue>
            <IndexLine>
              上证
              <IndexPct>-0.31%</IndexPct>
            </IndexLine>
          </IndexBlock>
          <DockItem><DockGlyph><DocIcon /></DockGlyph><DockLabel>下单</DockLabel></DockItem>
          <DockItem><DockGlyph><CommunityIcon /></DockGlyph><DockLabel>社区</DockLabel></DockItem>
          <DockItem><DockGlyph><AddIcon /></DockGlyph><DockLabel>加自选</DockLabel></DockItem>
          <DockItem><DockGlyph><MenuIcon /></DockGlyph><DockLabel>功能</DockLabel></DockItem>
        </DockRow>
        <HomeBar />
      </Dock>
    </Page>
  );
}
